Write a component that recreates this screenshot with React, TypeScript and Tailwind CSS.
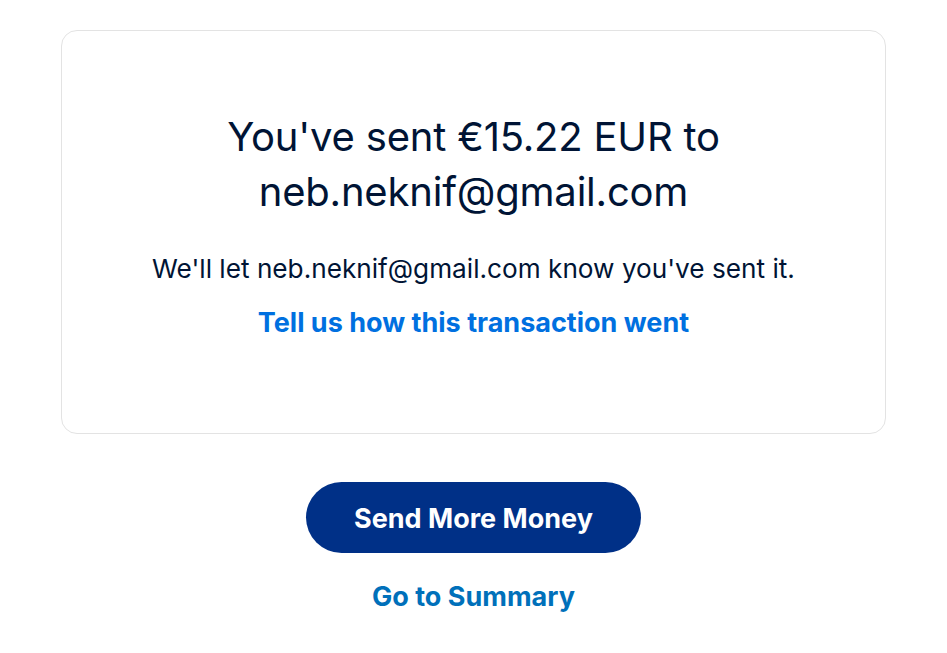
import React from 'react';

const App: React.FC = () => {
  return (
    <div className="min-h-screen bg-white px-[61px] pt-[30px]" style={{ fontFamily: 'Inter, "Liberation Sans", sans-serif' }}>
      {/* Confirmation card */}
      <div className="mx-auto flex h-[404px] max-w-[825px] flex-col items-center rounded-2xl border border-[#e3e3e3] px-10 pt-[78px] text-center">
        <h1 className="text-[40px] font-normal leading-[55px] tracking-[-0.2px] text-[#001435]">
          You've sent €15.22 EUR to
          <br />
          neb.neknif@gmail.com
        </h1>
        <p className="mt-[34px] text-[26.2px] leading-[32px] text-[#001435]">
          We'll let neb.neknif@gmail.com know you've sent it.
        </p>
        <a href="#" className="mt-[22px] text-[27px] font-bold leading-[32px] text-[#0070e0]">
          Tell us how this transaction went
        </a>
      </div>

      {/* Actions */}
      <div className="mt-[48px] flex flex-col items-center">
        <button className="h-[71px] w-[335px] rounded-full bg-[#003087] pt-[4px] text-[27px] font-bold text-white">
          Send More Money
        </button>
        <a href="#" className="mt-[28px] text-[27px] font-bold leading-[32px] text-[#0070ba]">
          Go to Summary
        </a>
      </div>
    </div>
  );
};

export default App;
